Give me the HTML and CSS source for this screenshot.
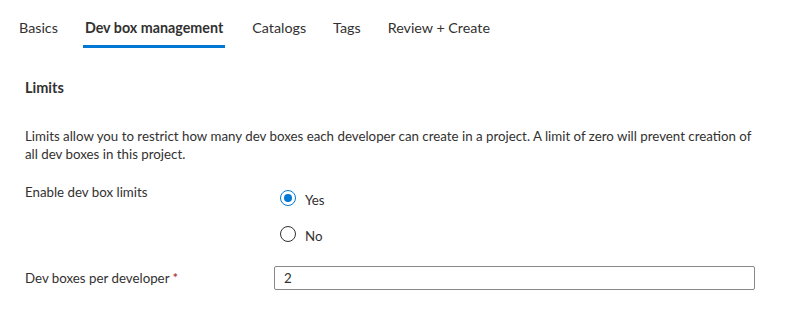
FILE: index.html
```html
<!DOCTYPE html>
<html lang="en">
<head>
  <meta charset="UTF-8" />
  <title>Create project</title>
  <link rel="stylesheet" href="styles.css">
</head>
<body>
  <nav class="tabs">
    <span class="tab">Basics</span>
    <span class="tab active">Dev box management</span>
    <span class="tab">Catalogs</span>
    <span class="tab">Tags</span>
    <span class="tab">Review + Create</span>
  </nav>

  <section class="content">
    <h3>Limits</h3>
    <p class="desc">Limits allow you to restrict how many dev boxes each developer can create in a project. A limit of zero will prevent creation of all dev boxes in this project.</p>

    <div class="row">
      <div class="label">Enable dev box limits</div>
      <div class="radios">
        <label class="radio"><span class="dot checked"></span>Yes</label>
        <label class="radio"><span class="dot"></span>No</label>
      </div>
    </div>

    <div class="row field">
      <div class="label">Dev boxes per developer <span class="req">*</span></div>
      <input class="text-input" type="text" value="2">
    </div>
  </section>
</body>
</html>
```

FILE: styles.css
```css
body {
  margin: 0;
  font-family: Lato, "Noto Sans", sans-serif;
  font-size: 13.3px;
  color: #323130;
  background: #fff;
}

.tabs {
  display: flex;
  padding: 19px 0 0 19px;
}

.tab {
  padding: 0 0 8px;
  margin-right: 27px;
  font-size: 14.3px;
  line-height: 18px;
  border-bottom: 3px solid transparent;
}

.tab.active {
  font-weight: 700;
  border-bottom-color: #0078d4;
  padding: 0 2px 8px;
  margin-left: -2px;
}

.content {
  padding: 0 25px;
}

h3 {
  margin: 30px 0 0;
  font-size: 14.5px;
  font-weight: 700;
  line-height: 20px;
}

.desc {
  margin: 29px 0 0;
  line-height: 18px;
  max-width: 730px;
}

.row {
  display: flex;
  margin-top: 20px;
}

.label {
  width: 255px;
  flex-shrink: 0;
  line-height: 18px;
}

.req {
  color: #a4262c;
}

.radios {
  display: flex;
  flex-direction: column;
  gap: 16px;
  padding-top: 7px;
}

.radio {
  display: flex;
  align-items: center;
  gap: 9px;
  line-height: 20px;
}

.dot {
  width: 14px;
  height: 14px;
  border: 1px solid #323130;
  border-radius: 50%;
  box-sizing: content-box;
  position: relative;
  margin-top: -4px;
}

.dot.checked {
  border-color: #0078d4;
}

.dot.checked::after {
  content: "";
  position: absolute;
  left: 3px;
  top: 3px;
  width: 8px;
  height: 8px;
  border-radius: 50%;
  background: #0078d4;
}

.field {
  margin-top: 20px;
  align-items: center;
}

.field .label {
  width: 249px;
}

.text-input {
  width: 481px;
  height: 24px;
  box-sizing: border-box;
  border: 1px solid #8a8886;
  border-radius: 2px;
  padding: 0 9px;
  font-family: inherit;
  font-size: 13.3px;
  color: #323130;
}
```
